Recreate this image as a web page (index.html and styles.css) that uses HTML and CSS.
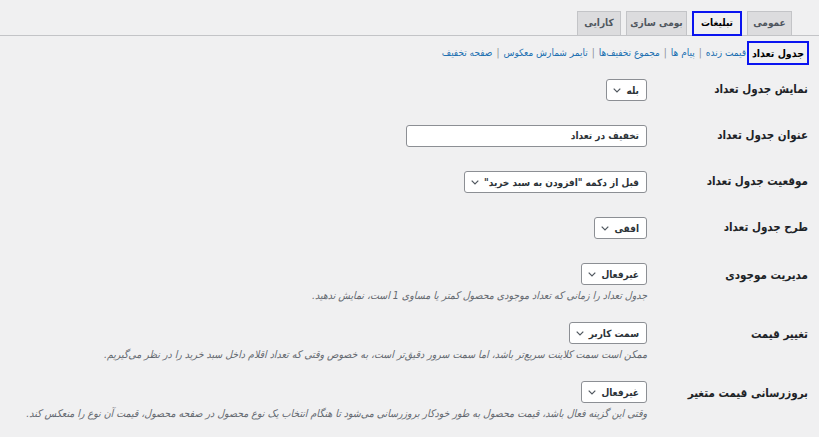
FILE: index.html
```html
<!DOCTYPE html>
<html lang="fa" dir="rtl">
<head>
<meta charset="utf-8">
<title>تنظیمات تبلیغات</title>
<link rel="stylesheet" href="styles.css">
</head>
<body>
<div class="wrap">
  <nav class="tabs">
    <a class="tab t-general">عمومی</a>
    <a class="tab t-ads active">تبلیغات</a>
    <a class="tab t-local">بومی سازی</a>
    <a class="tab t-perf">کارایی</a>
  </nav>
  <ul class="subsub">
    <li><a class="current">جدول تعداد</a></li>
    <li><a>قیمت زنده</a><span class="sep">|</span></li>
    <li><a>پیام ها</a><span class="sep">|</span></li>
    <li><a>مجموع تخفیف‌ها</a><span class="sep">|</span></li>
    <li><a>تایمر شمارش معکوس</a><span class="sep">|</span></li>
    <li><a>صفحه تخفیف</a></li>
  </ul>
  <div class="form">
    <div class="row">
      <div class="label">نمایش جدول تعداد</div>
      <div class="field"><div class="select w-yes"><span>بله</span><svg class="chev" viewBox="0 0 8 5" width="8" height="5"><path d="M0.7 0.7 L4 4 L7.3 0.7" /></svg></div></div>
    </div>
    <div class="row">
      <div class="label">عنوان جدول تعداد</div>
      <div class="field"><div class="input">تخفیف در تعداد</div></div>
    </div>
    <div class="row">
      <div class="label">موقعیت جدول تعداد</div>
      <div class="field"><div class="select w-pos"><span>قبل از دکمه "افزودن به سبد خرید"</span><svg class="chev" viewBox="0 0 8 5" width="8" height="5"><path d="M0.7 0.7 L4 4 L7.3 0.7" /></svg></div></div>
    </div>
    <div class="row">
      <div class="label">طرح جدول تعداد</div>
      <div class="field"><div class="select w-layout"><span>افقی</span><svg class="chev" viewBox="0 0 8 5" width="8" height="5"><path d="M0.7 0.7 L4 4 L7.3 0.7" /></svg></div></div>
    </div>
    <div class="row has-desc">
      <div class="label">مدیریت موجودی</div>
      <div class="field">
        <div class="select w-off"><span>غیرفعال</span><svg class="chev" viewBox="0 0 8 5" width="8" height="5"><path d="M0.7 0.7 L4 4 L7.3 0.7" /></svg></div>
        <p class="desc">جدول تعداد را زمانی که تعداد موجودی محصول کمتر یا مساوی 1 است، نمایش ندهید.</p>
      </div>
    </div>
    <div class="row has-desc">
      <div class="label">تغییر قیمت</div>
      <div class="field">
        <div class="select w-client"><span>سمت کاربر</span><svg class="chev" viewBox="0 0 8 5" width="8" height="5"><path d="M0.7 0.7 L4 4 L7.3 0.7" /></svg></div>
        <p class="desc">ممکن است سمت کلاینت سریع‌تر باشد، اما سمت سرور دقیق‌تر است، به خصوص وقتی که تعداد اقلام داخل سبد خرید را در نظر می‌گیریم.</p>
      </div>
    </div>
    <div class="row has-desc">
      <div class="label">بروزرسانی قیمت متغیر</div>
      <div class="field">
        <div class="select w-off"><span>غیرفعال</span><svg class="chev" viewBox="0 0 8 5" width="8" height="5"><path d="M0.7 0.7 L4 4 L7.3 0.7" /></svg></div>
        <p class="desc">وقتی این گزینه فعال باشد، قیمت محصول به طور خودکار بروزرسانی می‌شود تا هنگام انتخاب یک نوع محصول در صفحه محصول، قیمت آن نوع را منعکس کند.</p>
      </div>
    </div>
  </div>
</div>
</body>
</html>
```

FILE: styles.css
```css
* { box-sizing: border-box; }
html, body { margin: 0; padding: 0; }
body {
  background: #f0f0f1;
  color: #1d2327;
  font-family: "DejaVu Sans Condensed", "DejaVu Sans", sans-serif;
  font-size: 12px;
  direction: rtl;
  width: 819px;
  height: 437px;
  overflow: hidden;
}
.wrap { padding-top: 11px; }

.tabs {
  display: flex;
  gap: 5px;
  padding-right: 27px;
  border-bottom: 1px solid #c3c4c7;
  height: 25px;
}
.tab {
  display: flex;
  justify-content: center;
  height: 24px;
  padding: 0;
  line-height: 22px;
  font-weight: bold;
  font-size: 10px;
  color: #50575e;
  background: #dcdcde;
  border: 1px solid #c3c4c7;
  border-bottom: none;
  white-space: nowrap;
}
.t-general { width: 45px; }
.t-ads { width: 50px; }
.t-local { width: 61px; }
.t-perf { width: 44px; }
.tab.active {
  background: #f0f0f1;
  color: #000;
  height: 25px;
  outline: 2px solid #0a14f0;
  outline-offset: -2px;
}

.subsub {
  list-style: none;
  margin: 4px 0 0;
  padding: 0 10px 0 0;
  display: flex;
  height: 25px;
  align-items: center;
  font-size: 10px;
  white-space: nowrap;
}
.subsub li { display: flex; align-items: center; }
.subsub a { color: #2271b1; }
.subsub .sep { color: #8c8f94; margin: 0 4px; }
.subsub .current {
  color: #000;
  font-weight: bold;
  font-size: 10.5px;
  padding: 0 3px;
  line-height: 20px;
  border: 2px solid #0a14f0;
  margin-left: 1px;
}

.form { padding: 2px 11px 0 0; }
.row {
  display: grid;
  grid-template-columns: 161px 1fr;
  padding: 12px 0;
}
.row.has-desc { padding-bottom: 8px; }
.row.has-desc .label { padding-top: 2px; }
.label {
  font-weight: bold;
  font-size: 11.5px;
  line-height: 20px;
  color: #1d2327;
  white-space: nowrap;
}
.field { display: flex; flex-direction: column; align-items: flex-start; }

.select, .input {
  height: 22px;
  background: #fff;
  border: 1px solid #8c8f94;
  border-radius: 3px;
  font-size: 10px;
  color: #2c3338;
  white-space: nowrap;
}
.select {
  display: flex;
  align-items: center;
  justify-content: space-between;
  gap: 5px;
  padding: 0 7px 0 6px;
  font-weight: bold;
}
.chev { fill: none; stroke: #50575e; stroke-width: 1.2; flex: none; }
.w-yes { min-width: 39px; }
.w-pos { min-width: 162px; }
.w-layout { min-width: 52px; }
.w-off { min-width: 57px; }
.w-client { min-width: 69px; }
.input {
  width: 241px;
  line-height: 20px;
  padding: 0 7px;
  font-weight: bold;
}
.desc {
  margin: 3px 0 0;
  font-size: 10.5px;
  line-height: 14px;
  font-style: italic;
  color: #646970;
  white-space: nowrap;
}
```
